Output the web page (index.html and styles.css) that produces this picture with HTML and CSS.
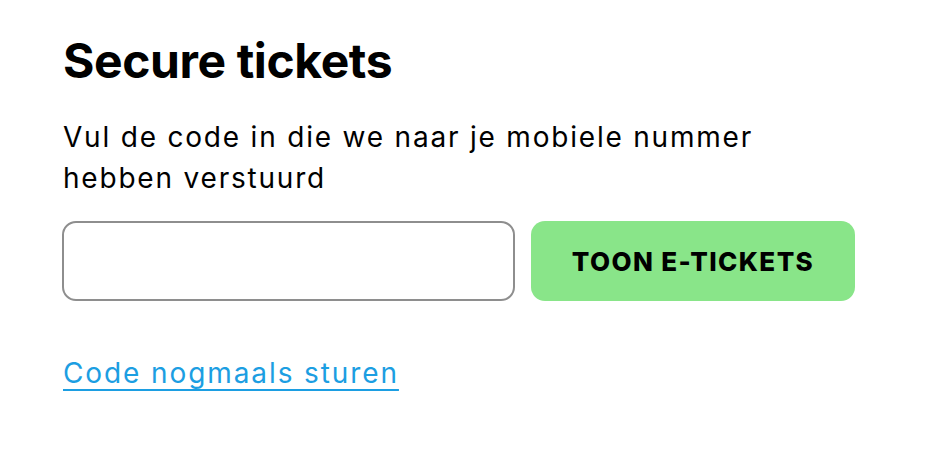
FILE: index.html
```html
<!DOCTYPE html>
<html lang="nl">
<head>
<meta charset="utf-8">
<title>Secure tickets</title>
<link rel="stylesheet" href="styles.css">
</head>
<body>
<main class="page">
  <h1 class="title">Secure tickets</h1>
  <p class="intro">Vul de code in die we naar je mobiele nummer<br>hebben verstuurd</p>
  <form class="code-form">
    <input class="code-input" type="text" aria-label="Code">
    <button class="submit" type="button">TOON E-TICKETS</button>
  </form>
  <a class="resend" href="#">Code nogmaals sturen</a>
</main>
</body>
</html>
```
FILE: styles.css
```css
html, body {
  margin: 0;
  padding: 0;
  background: #ffffff;
}

body {
  font-family: Inter, "Noto Sans", "Liberation Sans", sans-serif;
  color: #000000;
}

.page {
  display: flex;
  flex-direction: column;
  align-items: flex-start;
  padding: 32px 0 0 62px;
}

.title {
  margin: 0 0 0 1px;
  font-size: 48px;
  line-height: 58px;
  font-weight: 700;
  letter-spacing: -0.4px;
}

.intro {
  margin: 27px 0 0 1px;
  font-size: 28px;
  line-height: 41px;
  font-weight: 400;
  letter-spacing: 1.8px;
}

.code-form {
  display: flex;
  gap: 16px;
  margin-top: 22px;
}

.code-input {
  box-sizing: border-box;
  width: 453px;
  height: 80px;
  border: 2px solid #8e8e8e;
  border-radius: 14px;
  background: #fff;
  font: inherit;
  font-size: 28px;
  padding: 0 18px;
  outline: none;
}

.submit {
  box-sizing: border-box;
  width: 324px;
  height: 80px;
  border: none;
  border-radius: 14px;
  background: #89e589;
  color: #000;
  font-family: inherit;
  font-size: 26px;
  font-weight: 800;
  letter-spacing: 1.4px;
  cursor: pointer;
}

.resend {
  margin: 52px 0 0 1px;
  font-size: 28px;
  line-height: 41px;
  letter-spacing: 1.9px;
  color: #1c9ee2;
  text-decoration: underline;
  text-decoration-thickness: 2px;
  text-underline-offset: 6px;
}
```
